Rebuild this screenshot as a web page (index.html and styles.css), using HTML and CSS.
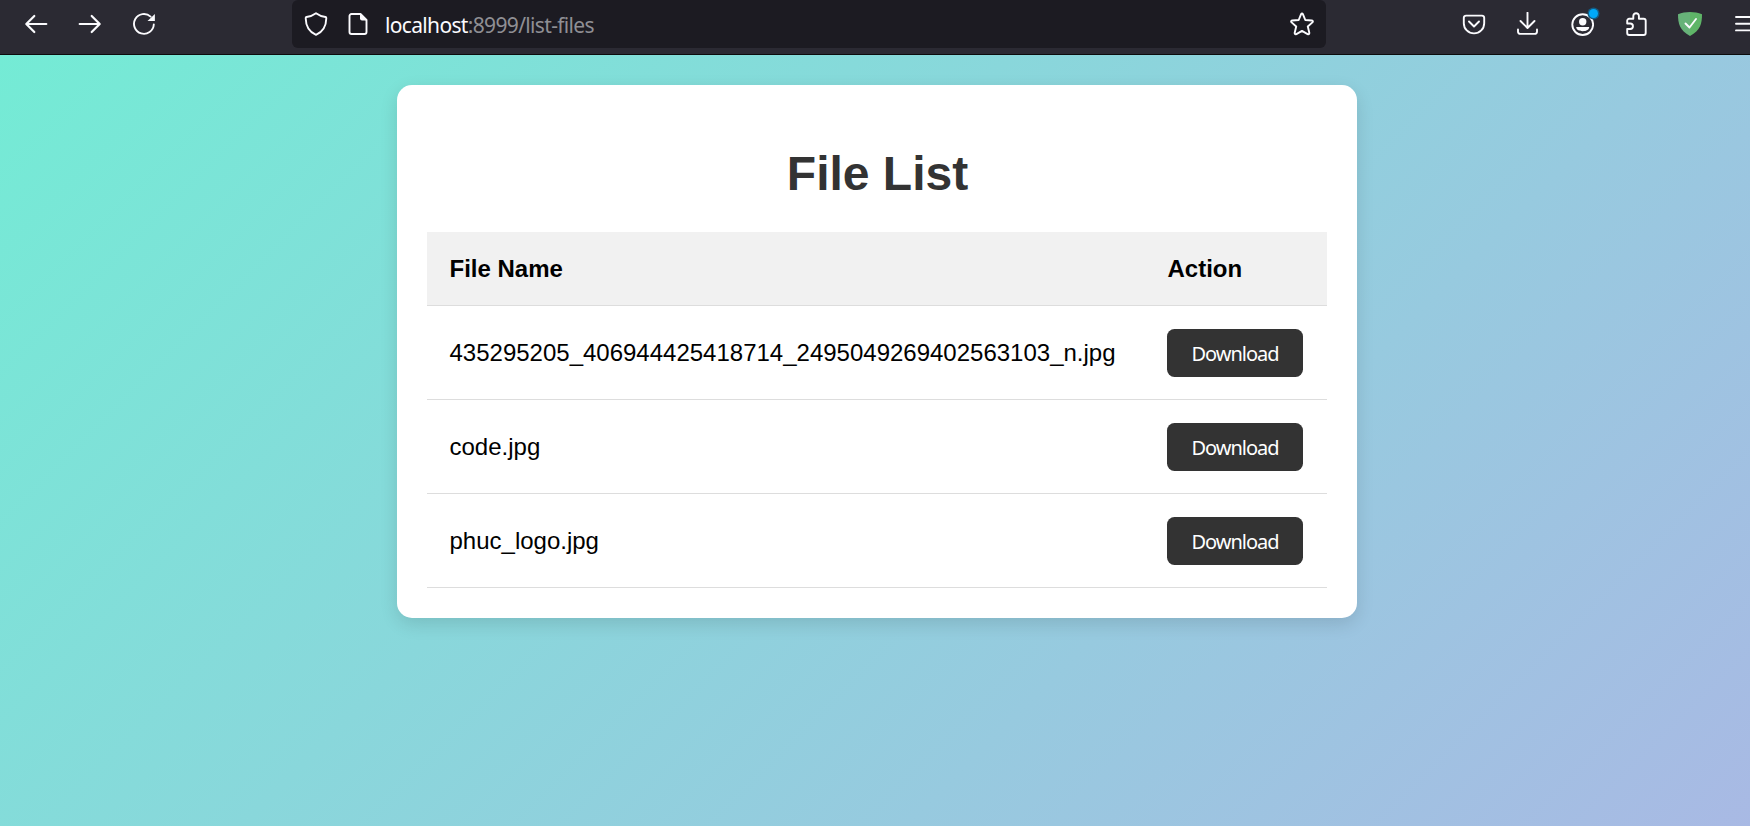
FILE: index.html
```html
<!DOCTYPE html>
<html lang="en">
<head>
<meta charset="utf-8">
<title>File List</title>
<link rel="stylesheet" href="styles.css">
</head>
<body>
<header class="toolbar">
  <nav class="nav">
    <svg class="icon" viewBox="0 0 24 24"><path d="M22.3 12H2.5M10.3 4L2.3 12l8 8" stroke-width="2.2"/></svg>
    <svg class="icon" viewBox="0 0 24 24"><path d="M1.7 12h19.8M13.7 4l8 8-8 8" stroke-width="2.2"/></svg>
    <svg class="icon" viewBox="0 0 24 24"><path d="M21.800 12.500A9.900 9.900 0 1 1 18.600 4.600"/><path class="solid" d="M22.900 2v7h-7.400z" /></svg>
  </nav>
  <div class="urlbar">
    <svg class="icon" viewBox="0 0 24 24"><path d="M12 1.2C9.2 3.3 5.700 4.500 2.500 5Q1.600 5.300 1.700 6.200C1.800 14 5.500 20 12 22.800 18.500 20 22.200 14 22.300 6.200Q22.400 5.300 21.500 5C18.300 4.500 14.800 3.300 12 1.200z"/></svg>
    <svg class="icon" viewBox="0 0 24 24"><path d="M5.500 2h9l6 6v12a2 2 0 0 1-2 2h-13a2 2 0 0 1-2-2V4a2 2 0 0 1 2-2z"/><path class="solid" d="M14 1.500l7 7h-5a2 2 0 0 1-2-2z"/></svg>
    <span class="url"><span class="host">localhost</span>:8999/list-files</span>
    <svg class="icon star" viewBox="0 0 24 24"><path d="M11 2.300Q12 .8 13 2.300L15.300 8l6.500.5Q23.600 9 22.400 10.400L17.800 14.500l1.500 6.200Q19.500 22.800 17.600 22.100L12 18.900l-5.600 3.200Q4.500 22.800 4.700 20.700l1.500-6.200L1.600 10.400Q.4 9 2.200 8.500L8.700 8z"/></svg>
  </div>
  <div class="tools">
    <svg class="icon" viewBox="0 0 24 24"><path d="M4 3.600h16a2.200 2.200 0 0 1 2.200 2.200v5.400a10.200 10.200 0 0 1-20.400 0V5.800A2.200 2.200 0 0 1 4 3.600zM7 9.500l5 5 5-5"/></svg>
    <svg class="icon" viewBox="0 0 24 24"><path d="M11.500.7v15M4.500 9l7 7 7-7M2 17.500v2.200a2.200 2.200 0 0 0 2.200 2.200h14.600a2.200 2.200 0 0 0 2.200-2.200v-2.200"/></svg>
    <span class="account">
      <svg class="icon" viewBox="0 0 24 24"><circle cx="12.700" cy="12.600" r="10.400"/><circle class="solid" cx="12.700" cy="9.700" r="3.700"/><path class="solid" d="M6.200 15.100h13c0 2.400-2.700 4.200-6.500 4.200s-6.500-1.800-6.500-4.200z"/></svg>
      <i class="dot"></i>
    </span>
    <svg class="icon" viewBox="0 0 24 24"><path d="M9.300 6.800V4a2.800 2.800 0 0 1 5.600 0v2.800h4.800a2 2 0 0 1 2 2V21a2 2 0 0 1-2 2H5.200a2 2 0 0 1-2-2v-4h3a2.700 2.700 0 0 0 0-5.500h-3V8.800a2 2 0 0 1 2-2z"/></svg>
    <svg class="icon" viewBox="0 0 24 24"><path class="guard" d="M12 0C8 0 3.500.8 0 2.300 0 11.500 1.500 18.500 12 24z"/><path class="guard-light" d="M12 0c4 0 8.500.8 12 2.300C24 11.500 22.500 18.500 12 24z"/><path d="M7.500 11.500l4 4 6.500-8.500"/></svg>
    <svg class="icon" viewBox="0 0 24 24"><path d="M4 5h20M4 11.700h20M4 18.400h20"/></svg>
  </div>
</header>
<main class="page">
  <section class="card">
    <h1 class="title">File List</h1>
    <table class="files">
      <thead>
        <tr><th>File Name</th><th class="action">Action</th></tr>
      </thead>
      <tbody>
        <tr><td>435295205_406944425418714_2495049269402563103_n.jpg</td><td><button class="download">Download</button></td></tr>
        <tr><td>code.jpg</td><td><button class="download">Download</button></td></tr>
        <tr><td>phuc_logo.jpg</td><td><button class="download">Download</button></td></tr>
      </tbody>
    </table>
  </section>
</main>
</body>
</html>
```

FILE: styles.css
```css
* { box-sizing: border-box; }

body {
  margin: 0;
  height: 826px;
  overflow: hidden;
  display: flex;
  flex-direction: column;
  font-family: "Liberation Sans", Arial, sans-serif;
  font-size: 24px;
}

.toolbar {
  height: 55px;
  flex: none;
  display: flex;
  align-items: flex-start;
  background: #2b2a33;
  border-bottom: 1px solid #0c0c0d;
  overflow: hidden;
}

.icon {
  width: 24px;
  height: 24px;
  flex: none;
  display: block;
  fill: none;
  stroke: #fbfbfe;
  stroke-width: 1.9;
  stroke-linecap: round;
  stroke-linejoin: round;
}
.icon .solid { fill: #fbfbfe; stroke: none; }
.icon .guard { fill: #67b279; stroke: none; }
.icon .guard-light { fill: #5fb568; stroke: none; }

.nav {
  width: 292px;
  flex: none;
  display: flex;
  gap: 30px;
  padding: 12px 0 0 24px;
}

.urlbar {
  width: 1034px;
  height: 48px;
  flex: none;
  display: flex;
  gap: 18px;
  padding: 12px 12px 0;
  background: #1c1b22;
  border-radius: 6px;
}
.url {
  margin-left: -3px;
  font: 21px/27px "Noto Sans", sans-serif;
  letter-spacing: -0.66px;
  color: #8f8f94;
  white-space: nowrap;
}
.host { color: #fbfbfe; }
.star { margin-left: auto; }

.tools {
  flex: none;
  display: flex;
  gap: 30px;
  padding: 12px 0 0 136px;
}
.account { position: relative; }
.dot {
  position: absolute;
  left: 19px;
  top: -3px;
  width: 9px;
  height: 9px;
  border-radius: 50%;
  background: #00a9f8;
  box-shadow: 0 0 0 1.5px #145a80;
}

.page {
  flex: 1;
  padding-top: 30px;
  background: linear-gradient(135deg, #74ebd5, #acb6e5) 0 0 / 1788px 900px no-repeat;
}

.card {
  width: 960px;
  height: 533px;
  margin-left: 397px;
  padding: 30px;
  background: #fff;
  border-radius: 15px;
  box-shadow: 0 6px 18px rgba(0, 0, 0, 0.12);
}

.title {
  margin: 31px 0;
  padding-left: 1px;
  font-size: 48px;
  line-height: 55px;
  text-align: center;
  color: #333;
}

.files {
  width: 100%;
  border-collapse: separate;
  border-spacing: 0;
  table-layout: fixed;
}
.files th, .files td {
  height: 94px;
  padding: 0 22.5px;
  text-align: left;
  border-bottom: 1px solid #ddd;
}
.files th { height: 74px; background: #f1f1f1; }
.files .action { width: 182px; }
.files th:first-child, .files td:first-child { white-space: nowrap; }
.files td:last-child { padding-left: 22px; }

.download {
  display: block;
  width: 136px;
  height: 48px;
  padding: 2px 0 0;
  border: 0;
  border-radius: 7.5px;
  background: #333;
  color: #fff;
  font: 20px/46px "Noto Sans", sans-serif;
  letter-spacing: -1px;
}
```
